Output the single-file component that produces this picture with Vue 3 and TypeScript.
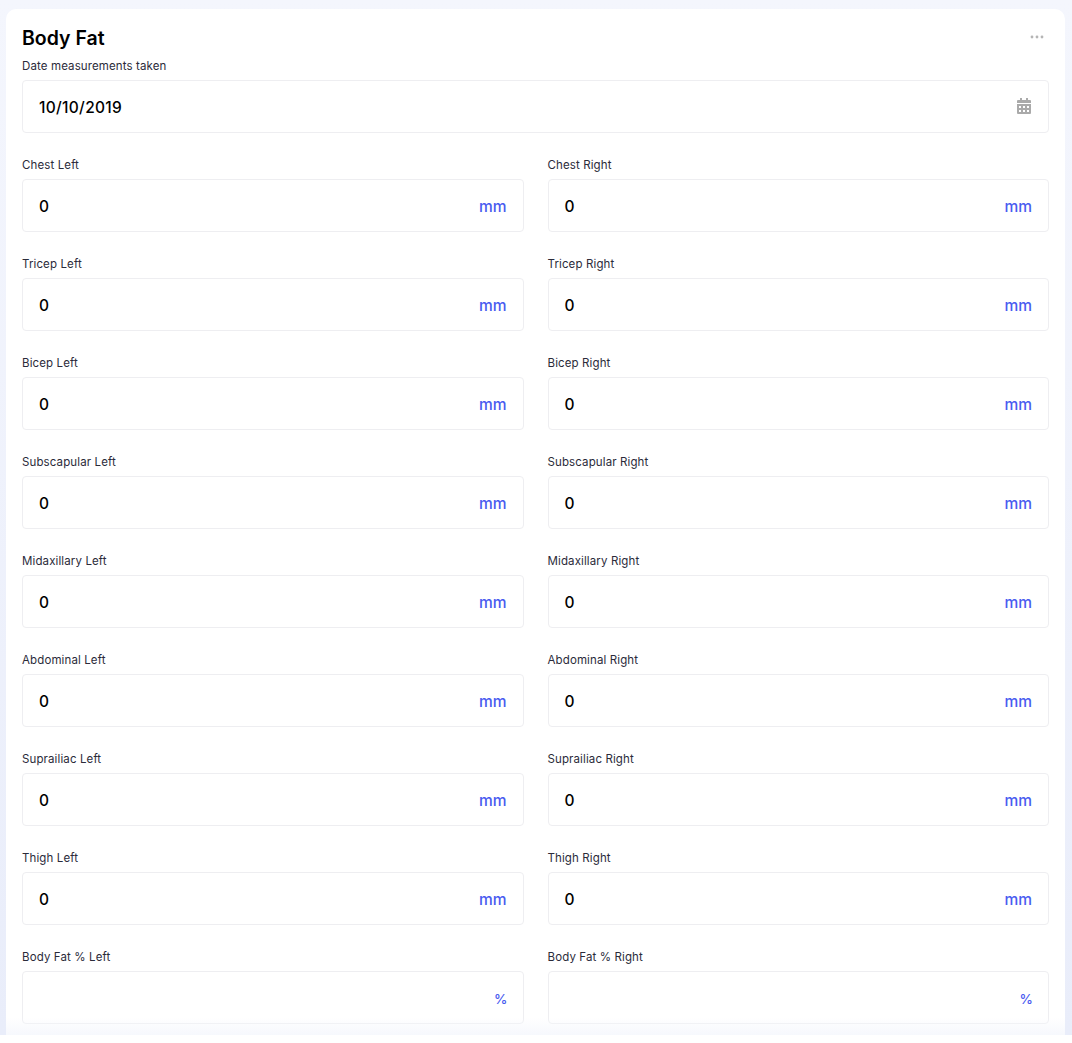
<script setup lang="ts">
const rows: [string, string, string][] = [
  ['Chest Left', 'Chest Right', 'mm'],
  ['Tricep Left', 'Tricep Right', 'mm'],
  ['Bicep Left', 'Bicep Right', 'mm'],
  ['Subscapular Left', 'Subscapular Right', 'mm'],
  ['Midaxillary Left', 'Midaxillary Right', 'mm'],
  ['Abdominal Left', 'Abdominal Right', 'mm'],
  ['Suprailiac Left', 'Suprailiac Right', 'mm'],
  ['Thigh Left', 'Thigh Right', 'mm'],
]
const fields = rows.flatMap(([l, r, u]) => [
  { label: l, value: '0', unit: u },
  { label: r, value: '0', unit: u },
])
fields.push({ label: 'Body Fat % Left', value: '', unit: '%' })
fields.push({ label: 'Body Fat % Right', value: '', unit: '%' })
</script>

<template>
  <div class="page">
    <section class="card">
      <header class="head">
        <h1 class="title">Body Fat</h1>
        <svg class="dots" width="14" height="4" viewBox="0 0 14 4" aria-hidden="true">
          <circle cx="2" cy="2" r="1.4" />
          <circle cx="7" cy="2" r="1.4" />
          <circle cx="12" cy="2" r="1.4" />
        </svg>
      </header>

      <div class="field date">
        <label class="label">Date measurements taken</label>
        <div class="box">
          <span class="value date-value">10/10/2019</span>
          <svg class="cal" width="14" height="16" viewBox="0 0 14 16" aria-hidden="true">
            <path fill-rule="evenodd" d="M3 0h2v2h4V0h2v2h2a1 1 0 0 1 1 1v2H0V3a1 1 0 0 1 1-1h2V0ZM0 6h14v9a1 1 0 0 1-1 1H1a1 1 0 0 1-1-1V6Zm2 2v2h2V8H2Zm4 0v2h2V8H6Zm4 0v2h2V8h-2ZM2 12v2h2v-2H2Zm4 0v2h2v-2H6Zm4 0v2h2v-2h-2Z" />
          </svg>
        </div>
      </div>

      <div class="grid">
        <div v-for="f in fields" :key="f.label" class="field">
          <label class="label">{{ f.label }}</label>
          <div class="box">
            <span class="value">{{ f.value }}</span>
            <span class="unit" :class="{ percent: f.unit === '%' }">{{ f.unit }}</span>
          </div>
        </div>
      </div>
    </section>
  </div>
</template>

<style>
html, body { margin: 0; background: #fff; }
</style>

<style scoped>
.page {
  position: relative;
  height: 1035px;
  overflow: hidden;
  box-sizing: border-box;
  padding: 9px 7px 0 6px;
  background: linear-gradient(180deg, #f4f6fd 0, #e9edfa 100%);
  font-family: Inter, "Open Sans", sans-serif;
}
.page::after {
  content: "";
  position: absolute;
  left: 6px;
  right: 7px;
  bottom: 0;
  height: 18px;
  background: linear-gradient(180deg, rgba(246, 248, 253, 0) 0, #f6f8fd 100%);
  pointer-events: none;
}
.card {
  height: 1040px;
  box-sizing: border-box;
  padding: 16px 16px 0;
  background: #fff;
  border-radius: 10px;
}
.head {
  display: flex;
  justify-content: space-between;
  align-items: center;
  height: 24px;
}
.title {
  margin: 0;
  padding-top: 2px;
  font-size: 19.5px;
  font-weight: 600;
  color: #000;
}
.dots { fill: #b5b5b5; margin-right: 5px; }
.field { display: flex; flex-direction: column; }
.date { margin-top: 9px; }
.label {
  height: 17px;
  line-height: 17px;
  font-size: 11.5px;
  letter-spacing: 0.12px;
  color: #2b2b3a;
}
.box {
  margin-top: 5px;
  height: 53px;
  box-sizing: border-box;
  display: flex;
  align-items: center;
  justify-content: space-between;
  padding: 0 16px;
  border: 1px solid #eeeef1;
  border-radius: 4px;
  background: #fff;
}
.value { padding-top: 2px; font-size: 15.5px; font-weight: 500; color: #000; }
.date-value { letter-spacing: 0.3px; }
.unit { padding-top: 2px; font-size: 15.5px; font-weight: 500; color: #4a5cf0; }
.percent { font-size: 13.5px; margin-right: -1px; }
.cal { fill: #aaa; margin: 0 1px 2px 0; }
.grid {
  margin-top: 24px;
  display: grid;
  grid-template-columns: 1fr 1fr;
  column-gap: 24px;
  row-gap: 24px;
}
</style>
